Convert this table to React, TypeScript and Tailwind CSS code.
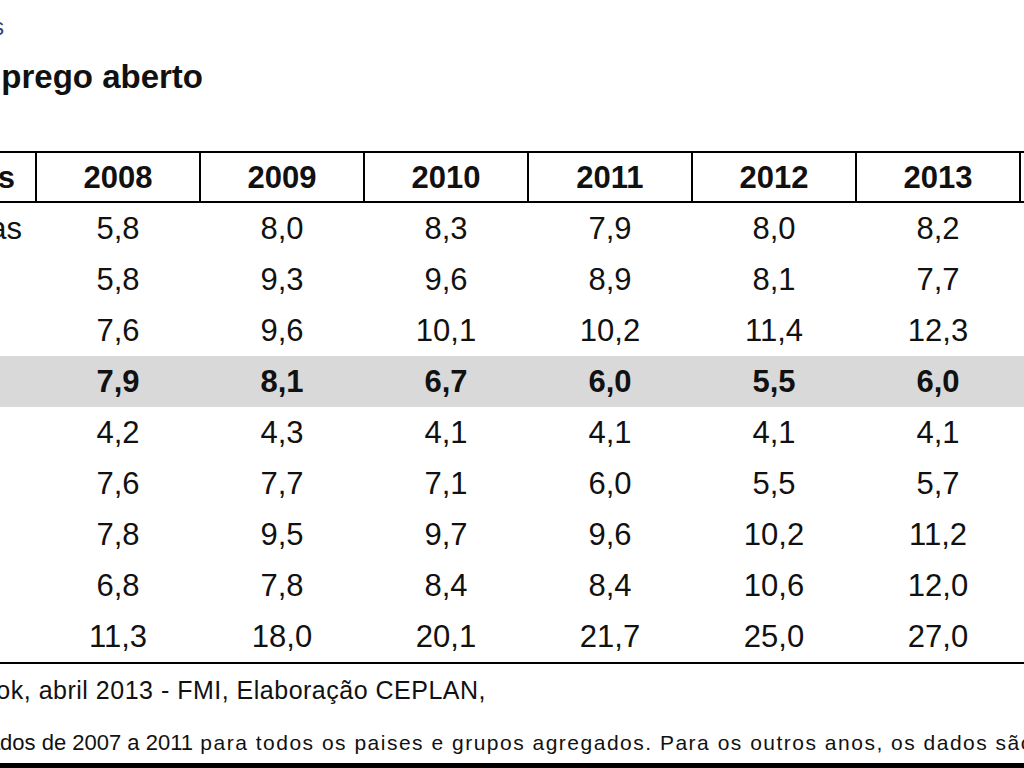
import React from 'react';

const years = ['2008', '2009', '2010', '2011', '2012', '2013', '2014'];

const rows = [
  { name: 'Economias avançadas', values: ['5,8', '8,0', '8,3', '7,9', '8,0', '8,2', '8,1'] },
  { name: 'Estados Unidos', values: ['5,8', '9,3', '9,6', '8,9', '8,1', '7,7', '7,5'] },
  { name: 'Zona do Euro', values: ['7,6', '9,6', '10,1', '10,2', '11,4', '12,3', '12,3'] },
  { name: 'Brasil', values: ['7,9', '8,1', '6,7', '6,0', '5,5', '6,0', '6,5'], highlight: true },
  { name: 'China', values: ['4,2', '4,3', '4,1', '4,1', '4,1', '4,1', '4,1'] },
  { name: 'Alemanha', values: ['7,6', '7,7', '7,1', '6,0', '5,5', '5,7', '5,7'] },
  { name: 'França', values: ['7,8', '9,5', '9,7', '9,6', '10,2', '11,2', '11,6'] },
  { name: 'Itália', values: ['6,8', '7,8', '8,4', '8,4', '10,6', '12,0', '12,4'] },
  { name: 'Espanha', values: ['11,3', '18,0', '20,1', '21,7', '25,0', '27,0', '26,5'] },
];

export default function App() {
  return (
    <div
      className="w-[1024px] h-[768px] overflow-hidden bg-white text-[#111] flex flex-col"
      style={{ fontFamily: '"Liberation Sans", Arial, sans-serif' }}
    >
      {/* link cut off at the left edge */}
      <div className="mt-[16px] h-[23px] flex justify-end w-[4px]">
        <span className="whitespace-nowrap text-[23px] leading-[23px] text-[#2a4580]">Tabelas</span>
      </div>

      {/* title */}
      <div className="mt-[21px] h-[33px] flex justify-end w-[203px]">
        <span className="whitespace-nowrap text-[33px] leading-[33px] font-bold">
          Taxa de desemprego aberto
        </span>
      </div>

      {/* table */}
      <div className="mt-[58px] border-b-2 border-black">
        <div className="flex h-[52px] border-y-2 border-black">
          <div className="-ml-[364px] w-[399px] shrink-0 flex items-center justify-end pr-[20px]">
            <span className="whitespace-nowrap text-[31px] leading-none font-bold">Países</span>
          </div>
          {years.map((y) => (
            <div
              key={y}
              className="w-[164px] shrink-0 border-l-2 border-black flex items-center justify-center"
            >
              <span className="text-[31px] leading-none font-bold">{y}</span>
            </div>
          ))}
        </div>

        {rows.map((row) => (
          <div key={row.name} className={`flex h-[51px] ${row.highlight ? 'bg-[#d9d9d9]' : ''}`}>
            <div className="-ml-[364px] w-[399px] shrink-0 flex items-center justify-end pr-[13px]">
              {row.name === 'Economias avançadas' ? (
                <span className="whitespace-nowrap text-[31px] leading-none">{row.name}</span>
              ) : (
                <div className="w-[330px] shrink-0">
                  <span className={`whitespace-nowrap text-[31px] leading-none ${row.highlight ? 'font-bold' : ''}`}>
                    {row.name}
                  </span>
                </div>
              )}
            </div>
            {row.values.map((v, i) => (
              <div
                key={i}
                className="w-[164px] shrink-0 border-l-2 border-transparent flex items-center justify-center"
              >
                <span className={`text-[31px] leading-none ${row.highlight ? 'font-bold' : ''}`}>{v}</span>
              </div>
            ))}
          </div>
        ))}
      </div>

      {/* notes */}
      <div className="mt-[14px] h-[25px] flex justify-end w-[486px]">
        <span className="whitespace-nowrap text-[25px] leading-[25px] tracking-[0.5px]">
          Fonte: World Economic Outlook, abril 2013 - FMI, Elaboração CEPLAN,
        </span>
      </div>
      <div className="mt-[29px] h-[22px] flex items-baseline whitespace-nowrap">
        <div className="flex justify-end w-[193px] shrink-0">
          <span className="text-[22px] leading-[22px]">Nota: Dados observados de 2007 a 2011</span>
        </div>
        <span className="text-[21px] leading-[22px] tracking-[1.5px]">
          &nbsp;para todos os paises e grupos agregados. Para os outros anos, os dados são projeções.
        </span>
      </div>

      <div className="mt-auto h-[5px] bg-black" />
    </div>
  );
}
